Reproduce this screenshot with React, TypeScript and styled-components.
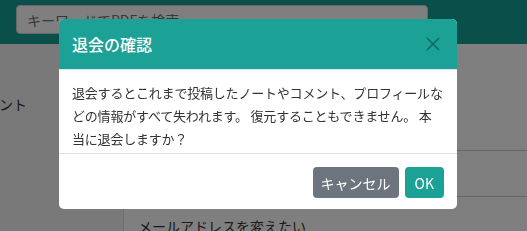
import React from "react";
import styled, { createGlobalStyle } from "styled-components";

const Global = createGlobalStyle`
  html, body { margin: 0; padding: 0; }
  body {
    width: 527px;
    height: 231px;
    overflow: hidden;
    background: #ffffff;
    font-family: "Noto Sans CJK JP", "Noto Sans", sans-serif;
    color: #333333;
  }
  * { box-sizing: border-box; }
`;

const Page = styled.div`
  width: 527px;
  height: 231px;
  display: flex;
  flex-direction: column;
  overflow: hidden;
`;

const TopBar = styled.header`
  height: 44px;
  background: #169e94;
  display: flex;
  align-items: flex-start;
  padding: 5px 0 0 16px;
  flex-shrink: 0;
`;

const Search = styled.div`
  width: 412px;
  height: 29px;
  background: #ffffff;
  border: 1px solid #cfcfcf;
  border-radius: 4px;
  display: flex;
  align-items: center;
  padding-left: 10px;
  font-size: 14px;
  color: #707070;
`;

const Main = styled.div`
  flex: 1;
  display: flex;
`;

const Sidebar = styled.nav`
  width: 124px;
  background: #f3f3f3;
  border-right: 1px solid #dddddd;
  overflow: hidden;
  padding-top: 50px;
`;

const SideItem = styled.div`
  font-size: 14px;
  color: #333;
  margin-left: -71px;
  white-space: nowrap;
`;

const Content = styled.div`
  flex: 1;
  display: flex;
  flex-direction: column;
  padding-top: 106px;
`;

const Rule = styled.div<{ $gap: number }>`
  height: 1px;
  background: #cccccc;
  margin-bottom: ${(p) => p.$gap}px;
`;

const FaqItem = styled.div`
  font-size: 14px;
  line-height: 20px;
  color: #333;
  padding: 19px 0 0 14px;
  white-space: nowrap;
`;

const Backdrop = styled.div`
  position: fixed;
  inset: 0;
  background: rgba(0, 0, 0, 0.5);
`;

const Dialog = styled.div`
  position: fixed;
  left: 59px;
  top: 19px;
  width: 398px;
  background: #ffffff;
  border-radius: 5px;
  overflow: hidden;
  display: flex;
  flex-direction: column;
`;

const DialogHeader = styled.div`
  height: 51px;
  background: #1ba195;
  border-bottom: 1px solid #dee2e6;
  display: flex;
  align-items: center;
  justify-content: space-between;
  padding: 0 17px 0 13px;
`;

const Title = styled.h5`
  margin: 0;
  font-size: 16px;
  font-weight: 500;
  color: #ffffff;
`;

const CloseButton = styled.button`
  border: 0;
  background: transparent;
  padding: 0;
  width: 14px;
  height: 14px;
  display: flex;
  align-items: center;
  justify-content: center;
  cursor: pointer;
`;

const DialogBody = styled.div`
  padding: 11px 13px 3px 13px;
  font-size: 13px;
  letter-spacing: -0.2px;
  line-height: 23px;
  color: #333333;
  border-bottom: 1px solid #dee2e6;
`;

const DialogFooter = styled.div`
  display: flex;
  justify-content: flex-end;
  gap: 6px;
  padding: 13px 13px 11px 13px;
`;

const Button = styled.button<{ $variant: "secondary" | "primary" }>`
  height: 31px;
  border: 0;
  border-radius: 4px;
  padding: 0 ${(p) => (p.$variant === "primary" ? 10 : 8)}px;
  font-family: "Noto Sans CJK JP", "Noto Sans", sans-serif;
  font-size: 14px;
  color: #ffffff;
  background: ${(p) => (p.$variant === "primary" ? "#1ba195" : "#6c757d")};
  cursor: pointer;
`;

export default function App() {
  return (
    <>
      <Global />
      <Page>
        <TopBar>
          <Search>キーワードでPDFを検索</Search>
        </TopBar>
        <Main>
          <Sidebar>
            <SideItem>マイアカウント</SideItem>
          </Sidebar>
          <Content>
            <Rule $gap={45} />
            <Rule $gap={0} />
            <FaqItem>メールアドレスを変えたい</FaqItem>
          </Content>
        </Main>
      </Page>
      <Backdrop />
      <Dialog role="dialog">
        <DialogHeader>
          <Title>退会の確認</Title>
          <CloseButton aria-label="閉じる">
            <svg width="14" height="14" viewBox="0 0 14 14">
              <path d="M1 1L13 13M13 1L1 13" stroke="#0e6a62" strokeWidth="1.6" fill="none" />
            </svg>
          </CloseButton>
        </DialogHeader>
        <DialogBody>
          退会するとこれまで投稿したノートやコメント、プロフィールなどの情報がすべて失われます。 復元することもできません。 本当に退会しますか？
        </DialogBody>
        <DialogFooter>
          <Button $variant="secondary">キャンセル</Button>
          <Button $variant="primary">OK</Button>
        </DialogFooter>
      </Dialog>
    </>
  );
}
